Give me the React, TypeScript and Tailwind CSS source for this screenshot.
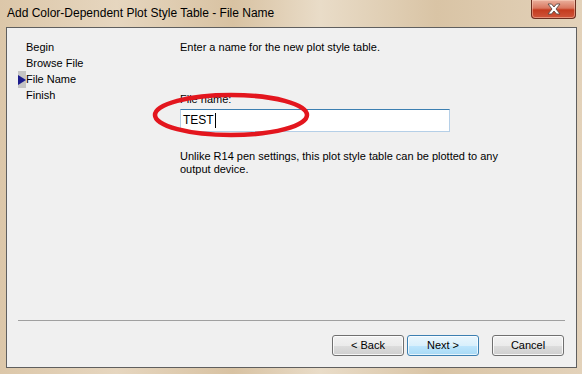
import React from "react";

const font = { fontFamily: '"Liberation Sans", Arial, sans-serif' };

function CloseButton() {
  return (
    <div className="flex h-[19px] w-[45px] items-center justify-center rounded-b-[4px] border border-t-0 border-[#6b2e20] bg-[linear-gradient(180deg,#eab09d_0%,#d9775f_45%,#c43b1f_55%,#d0553a_100%)] shadow-[inset_0_0_0_1px_rgba(255,220,200,0.45)]">
      <svg width="16" height="12" viewBox="0 0 16 12">
        <path
          d="M2 1 H5.5 L8 4 L10.5 1 H14 L10 6 L14 11 H10.5 L8 8 L5.5 11 H2 L6 6 Z"
          fill="#ffffff"
          stroke="#5a4a44"
          strokeWidth="0.9"
          strokeLinejoin="round"
        />
      </svg>
    </div>
  );
}

function WizButton({ label, primary }: { label: string; primary?: boolean }) {
  return (
    <div
      className={
        "flex h-[21px] w-[72px] items-center justify-center rounded-[3px] border text-[11px] text-black " +
        (primary
          ? "border-[#3c7fb1] bg-[linear-gradient(180deg,#eaf6fd_0%,#d9f0fc_50%,#bee6fd_51%,#a7d9f5_100%)] shadow-[inset_0_0_0_1px_rgba(255,255,255,0.7)]"
          : "border-[#707070] bg-[linear-gradient(180deg,#f2f2f2_0%,#ebebeb_50%,#dddddd_51%,#cfcfcf_100%)] shadow-[inset_0_0_0_1px_rgba(255,255,255,0.8)]")
      }
    >
      {label}
    </div>
  );
}

export default function App() {
  const steps = ["Begin", "Browse File", "File Name", "Finish"];
  return (
    <div
      className="flex h-[374px] w-[582px] flex-col overflow-hidden bg-[linear-gradient(90deg,#dcc7a9_0%,#e6d6bf_20%,#d8c2a2_40%,#e9dcc8_55%,#d9c4a5_75%,#e3d2ba_100%)]"
      style={font}
    >
      {/* title bar */}
      <div className="flex h-[27px] shrink-0 items-start justify-between pl-[7px] pr-[6px]">
        <div className="pt-[6px] text-[12px] leading-[15px] text-black">
          Add Color-Dependent Plot Style Table - File Name
        </div>
        <CloseButton />
      </div>

      {/* client area */}
      <div className="relative mb-[6px] ml-[6px] mr-[5px] flex flex-1 flex-col border border-[#5f5f5f] bg-[#f0f0f0] text-[11px] leading-[13px] text-black">
        <div className="flex flex-1 pt-[13px]">
          <div className="w-[173px] shrink-0 pl-[11px]">
            {steps.map((s) => (
              <div key={s} className="flex h-[16px] items-start">
                <div
                  className={
                    "mt-[-2px] flex h-[17px] w-[8px] items-center justify-start " +
                    (s === "File Name" ? "bg-[#c4c4c4]" : "")
                  }
                >
                  {s === "File Name" && (
                    <svg width="8" height="10" viewBox="0 0 8 10">
                      <path d="M0 0 L8 5 L0 10 Z" fill="#1a1a8c" />
                    </svg>
                  )}
                </div>
                <span>{s}</span>
              </div>
            ))}
          </div>

          <div className="flex flex-col">
            <div>Enter a name for the new plot style table.</div>
            <div className="mt-[39px]">File name:</div>
            <div className="mt-[3px] flex h-[23px] w-[270px] items-center border border-[#b5cfe7] border-t-[#3c7fb1] bg-white pl-[2px] text-[12px]">
              <span>TEST</span>
              <span className="ml-[1px] h-[15px] w-[1px] bg-black" />
            </div>
            <div className="mt-[18px] w-[330px]">
              Unlike R14 pen settings, this plot style table can be plotted to any output device.
            </div>
          </div>
        </div>

        <div className="mx-[11px] h-[2px] border-t border-[#a0a0a0] border-b-white" />

        <div className="flex items-center justify-end gap-[3px] pb-[11px] pr-[12px] pt-[13px]">
          <WizButton label="< Back" />
          <WizButton label="Next >" primary />
          <div className="w-[7px]" />
          <WizButton label="Cancel" />
        </div>

        {/* red annotation ellipse */}
        <svg
          className="pointer-events-none absolute left-[140px] top-[60px]"
          width="170"
          height="60"
          viewBox="0 0 170 60"
        >
          <ellipse cx="84" cy="27" rx="76" ry="20" fill="none" stroke="#e3161e" strokeWidth="4.5" />
        </svg>
      </div>
    </div>
  );
}
